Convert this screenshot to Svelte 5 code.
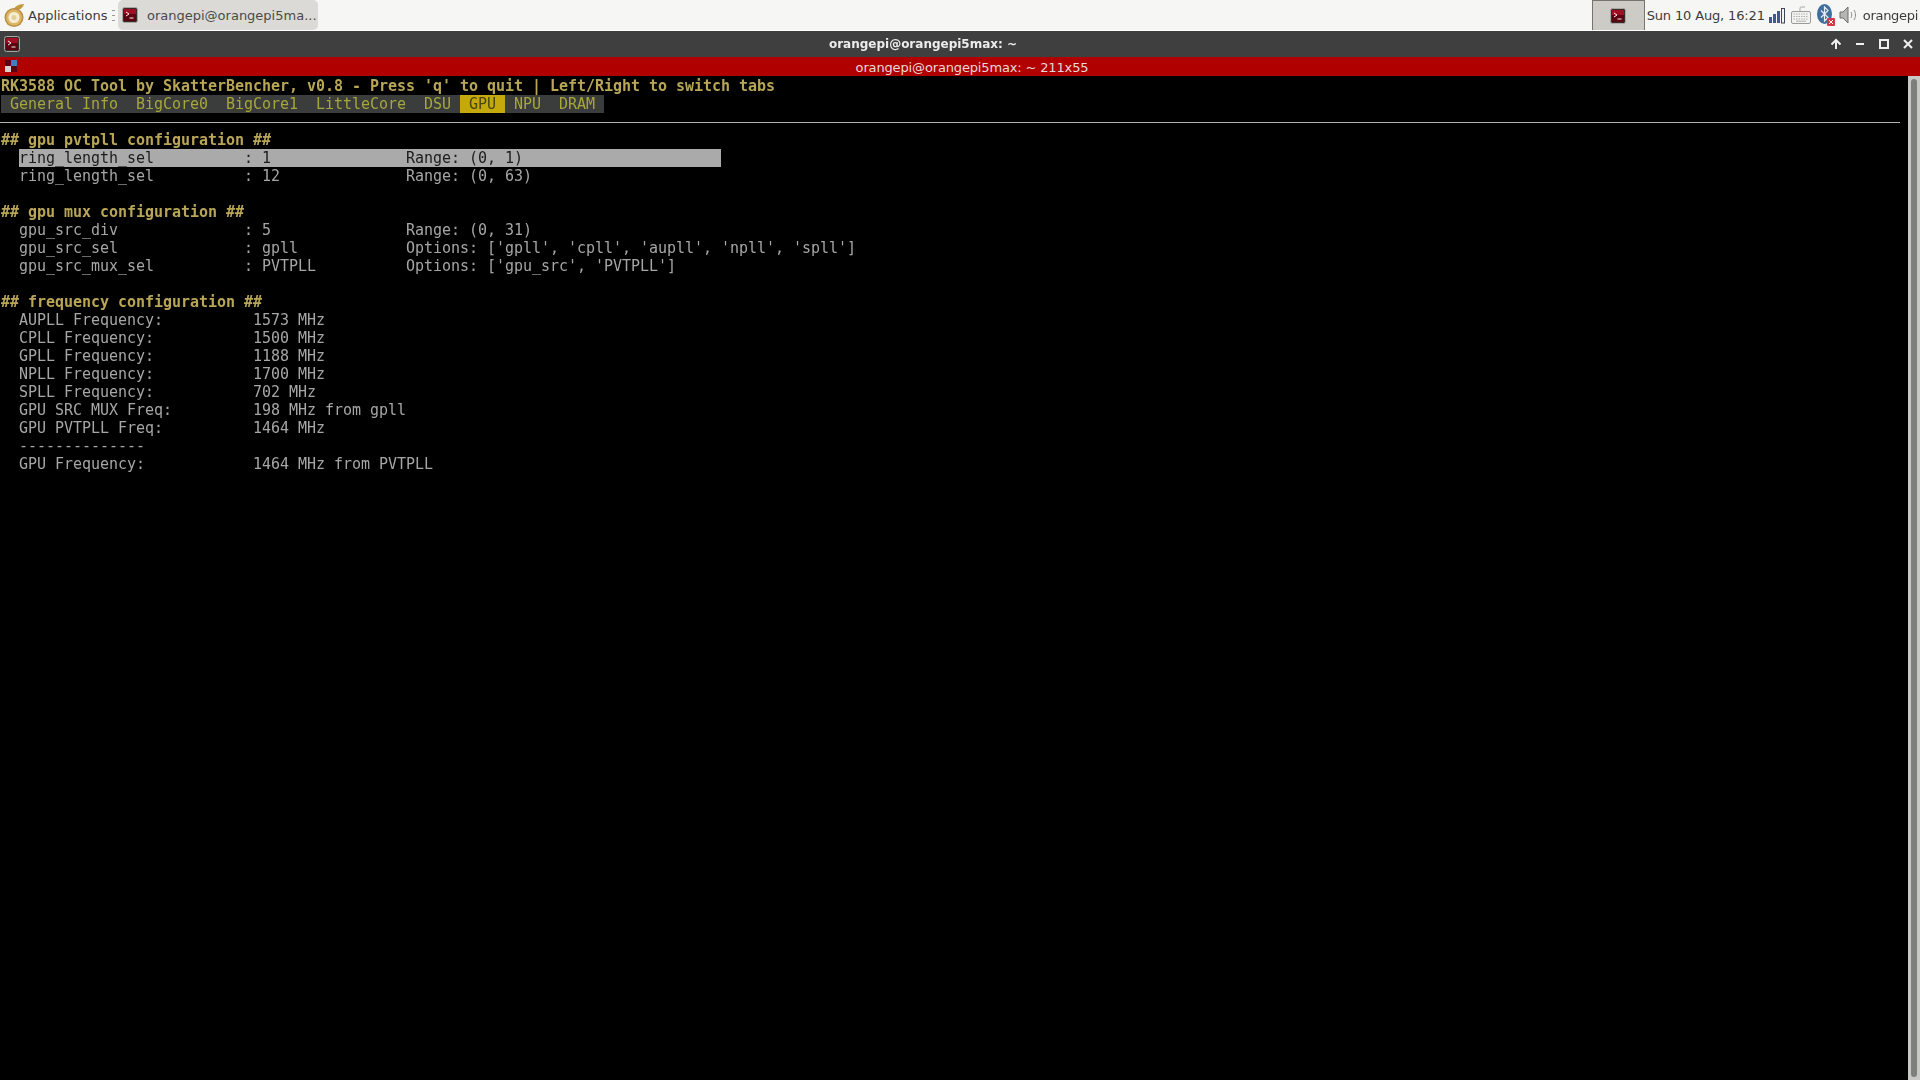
<script>
  const tabs = ["General Info", "BigCore0", "BigCore1", "LittleCore", "DSU", "GPU", "NPU", "DRAM"];
  const activeTab = "GPU";

  const sections = [
    {
      title: "## gpu pvtpll configuration ##",
      rows: [
        { name: "ring_length_sel", value: "1", note: "Range: (0, 1)", selected: true },
        { name: "ring_length_sel", value: "12", note: "Range: (0, 63)" },
      ],
    },
    {
      title: "## gpu mux configuration ##",
      rows: [
        { name: "gpu_src_div", value: "5", note: "Range: (0, 31)" },
        { name: "gpu_src_sel", value: "gpll", note: "Options: ['gpll', 'cpll', 'aupll', 'npll', 'spll']" },
        { name: "gpu_src_mux_sel", value: "PVTPLL", note: "Options: ['gpu_src', 'PVTPLL']" },
      ],
    },
  ];

  const freqs = [
    ["AUPLL Frequency:", "1573 MHz"],
    ["CPLL Frequency:", "1500 MHz"],
    ["GPLL Frequency:", "1188 MHz"],
    ["NPLL Frequency:", "1700 MHz"],
    ["SPLL Frequency:", "702 MHz"],
    ["GPU SRC MUX Freq:", "198 MHz from gpll"],
    ["GPU PVTPLL Freq:", "1464 MHz"],
    ["--------------", ""],
    ["GPU Frequency:", "1464 MHz from PVTPLL"],
  ];
</script>

{#snippet termIcon(size)}
  <svg class="term-icon" width={size} height={size} viewBox="0 0 16 16">
    <rect x="0.5" y="0.5" width="15" height="15" rx="2" fill="#3a2a2a" stroke="#a8a8a4" />
    <rect x="2" y="2" width="12" height="12" fill="#5e0410" />
    <rect x="2" y="2" width="12" height="5" fill="#a01024" />
    <path d="M4 5l3 2-3 2" fill="none" stroke="#f4f4f4" stroke-width="1" />
    <path d="M7.5 11h4" stroke="#f4f4f4" stroke-width="1" />
  </svg>
{/snippet}

<div class="desktop">
  <header class="panel">
    <div class="apps">
      <svg width="22" height="24" viewBox="0 0 22 24">
        <path d="M10 8c1-4 5-7 11-7-1 4-5 7-11 7z" fill="#c4983c" />
        <circle cx="11" cy="14.5" r="9.5" fill="#b98f45" />
        <circle cx="11" cy="14.5" r="8" fill="#dcb565" />
        <circle cx="11" cy="14.5" r="5.5" fill="#f6eed4" />
        <circle cx="11" cy="14.5" r="2.5" fill="#e2cf9c" />
      </svg>
      <span>Applications</span>
      <span class="grip"></span>
    </div>
    <div class="task">
      {@render termIcon(16)}
      <span>orangepi@orangepi5ma...</span>
    </div>
    <div class="tray">
      <div class="shown">{@render termIcon(16)}</div>
      <span class="clock">Sun 10 Aug, 16:21</span>
      <svg class="signal" width="18" height="18" viewBox="0 0 18 18">
        <rect x="1" y="11" width="3" height="6" fill="#3c5a92" />
        <rect x="5" y="8" width="3" height="9" fill="#3c5a92" />
        <rect x="9" y="5" width="3" height="12" fill="#3c5a92" />
        <rect x="13.5" y="2.5" width="3" height="14.5" fill="#f4f4f2" stroke="#3c4658" />
      </svg>
      <svg class="keyboard" width="20" height="20" viewBox="0 0 20 20">
        <path d="M9 6V3c0-1 1-1 2-1h3" fill="none" stroke="#a5a5a5" />
        <rect x="0.5" y="6.5" width="19" height="12" rx="1.5" fill="#f2f2f0" stroke="#9b9b9b" />
        <path d="M2.5 9h15M2.5 11.5h15M2.5 14h15" stroke="#b0b0b0" stroke-dasharray="1.5 1" />
        <path d="M5 16.2h10" stroke="#b0b0b0" />
      </svg>
      <svg class="bluetooth" width="18" height="22" viewBox="0 0 18 22">
        <ellipse cx="7.5" cy="10" rx="7.5" ry="10" fill="#3f6f9f" />
        <path d="M4 6.5l7 7-3.5 3.5v-14l3.5 3.5-7 7" fill="none" stroke="#e8eef4" stroke-width="1.2" />
        <rect x="10" y="14" width="8" height="8" rx="1" fill="#d23a4a" />
        <path d="M12 16l4 4M16 16l-4 4" stroke="#fff" stroke-width="1" />
      </svg>
      <svg class="speaker" width="18" height="20" viewBox="0 0 18 20">
        <path d="M1 7h3l5-5v16l-5-5H1z" fill="#b5b5b2" stroke="#6e6e6c" />
        <path d="M12 7c1 2 1 4 0 6M15 5c2 3 2 7 0 10" fill="none" stroke="#8a8a88" />
      </svg>
      <span class="user">orangepi</span>
    </div>
  </header>

  <div class="titlebar">
    <div class="title-icon">{@render termIcon(16)}</div>
    <span class="title-text">orangepi@orangepi5max: ~</span>
    <div class="win-buttons">
      <svg width="14" height="14" viewBox="0 0 14 14"><path d="M7 12V3M2.5 7.5L7 3l4.5 4.5" fill="none" stroke="#f0f0f0" stroke-width="2" /></svg>
      <svg width="14" height="14" viewBox="0 0 14 14"><path d="M3 7h8" stroke="#f0f0f0" stroke-width="2" /></svg>
      <svg width="14" height="14" viewBox="0 0 14 14"><rect x="3" y="3" width="8" height="8" fill="none" stroke="#f0f0f0" stroke-width="2" /></svg>
      <svg width="14" height="14" viewBox="0 0 14 14"><path d="M3 3l8 8M11 3l-8 8" stroke="#f0f0f0" stroke-width="2" /></svg>
    </div>
  </div>

  <div class="tmux-bar">
    <svg class="tmux-icon" width="14" height="14" viewBox="0 0 14 14">
      <rect x="1" y="1" width="12" height="12" fill="#5a0010" />
      <rect x="7" y="1" width="6" height="6" fill="#3f7fc0" />
      <rect x="1" y="7" width="6" height="6" fill="#d8d0d0" />
    </svg>
    <span>orangepi@orangepi5max: ~ 211x55</span>
  </div>

  <div class="term-wrap">
    <main class="term">
      <div class="row heading">RK3588 OC Tool by SkatterBencher, v0.8 - Press 'q' to quit | Left/Right to switch tabs</div>
      <div class="row tabs">
        {#each tabs as tab}
          <span class="tab" class:active={tab === activeTab}>{tab}</span>
        {/each}
      </div>
      <div class="row rule"></div>
      {#each sections as section}
        <div class="row heading">{section.title}</div>
        {#each section.rows as row}
          <div class="row item" class:selected={row.selected}>
            <span class="name">{row.name}</span><span class="colon">: {row.value}</span><span class="note">{row.note}</span>
          </div>
        {/each}
        <div class="row"></div>
      {/each}
      <div class="row heading">## frequency configuration ##</div>
      {#each freqs as [label, val]}
        <div class="row item">
          <span class="label">{label}</span><span class="note">{val}</span>
        </div>
      {/each}
    </main>
    <div class="scrollbar"><div class="thumb"></div></div>
  </div>
</div>

<style>
  :global(body) {
    margin: 0;
    background: #000;
    overflow: hidden;
  }
  .desktop {
    width: 1920px;
    height: 1080px;
    display: flex;
    flex-direction: column;
    font-family: "DejaVu Sans", sans-serif;
    filter: blur(0.35px);
  }
  svg {
    display: block;
    flex: none;
  }
  .panel {
    height: 30px;
    flex: none;
    display: flex;
    align-items: center;
    background: #f6f6f4;
    color: #3c3c3c;
    font-size: 13px;
    border-bottom: 1px solid #fff;
  }
  .apps {
    display: flex;
    align-items: center;
    gap: 3px;
    padding-left: 3px;
    width: 118px;
    height: 100%;
    box-sizing: border-box;
  }
  .grip {
    width: 3px;
    height: 9px;
    margin-left: 2px;
    border-top: 1px solid #999;
    border-bottom: 1px solid #999;
    background: linear-gradient(#999, #999) center / 100% 1px no-repeat;
  }
  .task {
    width: 200px;
    height: 30px;
    box-sizing: border-box;
    display: flex;
    align-items: center;
    gap: 9px;
    padding-left: 4px;
    background: #dbdad6;
    border-radius: 5px;
    color: #4a4a4a;
  }
  .tray {
    margin-left: auto;
    display: flex;
    align-items: center;
    height: 100%;
    padding-right: 2px;
  }
  .shown {
    width: 53px;
    height: 30px;
    box-sizing: border-box;
    display: flex;
    align-items: center;
    justify-content: center;
    background: #cdcbc6;
    border: 1px solid #77746c;
    border-bottom: none;
    margin-right: 2px;
  }
  .clock {
    letter-spacing: -0.15px;
    margin-right: 3px;
  }
  .keyboard {
    margin-left: 5px;
  }
  .bluetooth {
    margin-left: 6px;
  }
  .speaker {
    margin-left: 4px;
  }
  .user {
    margin-left: 6px;
    letter-spacing: -0.3px;
  }
  .titlebar {
    height: 26px;
    flex: none;
    display: flex;
    align-items: center;
    position: relative;
    background: #3f3f3f;
    color: #ececec;
    font-size: 12px;
    font-weight: bold;
  }
  .title-icon {
    padding-left: 4px;
  }
  .title-text {
    position: absolute;
    left: 0;
    top: 6px;
    width: 1846px;
    text-align: center;
  }
  .win-buttons {
    margin-left: auto;
    display: flex;
    gap: 10px;
    padding-right: 5px;
  }
  .tmux-bar {
    height: 19px;
    flex: none;
    position: relative;
    display: flex;
    align-items: center;
    justify-content: center;
    background: #b00000;
    color: #e8d8d8;
    font-size: 13px;
    letter-spacing: -0.15px;
    padding-left: 24px;
  }
  .tmux-bar span {
    padding-top: 2px;
  }
  .tmux-icon {
    position: absolute;
    left: 4px;
    top: 2px;
  }
  .term-wrap {
    flex: 1;
    display: flex;
    min-height: 0;
    background: #000;
  }
  .term {
    flex: 1;
    padding-top: 1px;
    padding-left: 1px;
    font-family: "DejaVu Sans Mono", monospace;
    font-size: 15px;
    letter-spacing: -0.03px;
    color: #a6a6a6;
  }
  .row {
    height: 18px;
    line-height: 18px;
    white-space: pre;
  }
  .heading {
    color: #b8a656;
    font-weight: bold;
  }
  .tabs {
    display: flex;
    width: 603px;
    background: #3a3d3c;
    color: #a6a63a;
  }
  .tab {
    flex: none;
    padding: 0 9px;
  }
  .tab.active {
    background: #c4a80c;
    color: #474710;
  }
  .rule {
    margin-left: -1px;
    background: linear-gradient(#b0b0b0, #b0b0b0) 0 9px / 1900px 1px no-repeat;
  }
  .item {
    display: flex;
    margin-left: 18px;
    width: 702px;
  }
  .name {
    flex: none;
    width: 225px;
  }
  .colon {
    flex: none;
    width: 162px;
  }
  .label {
    flex: none;
    width: 234px;
  }
  .note {
    flex: none;
  }
  .selected {
    background: #aaaaaa;
    color: #1c1c1c;
  }
  .scrollbar {
    width: 12px;
    flex: none;
    background: #c8c9c5;
    display: flex;
    justify-content: center;
    padding: 3px 0;
    box-sizing: border-box;
  }
  .thumb {
    width: 6px;
    border-radius: 3px;
    background: #7c807d;
  }
</style>
